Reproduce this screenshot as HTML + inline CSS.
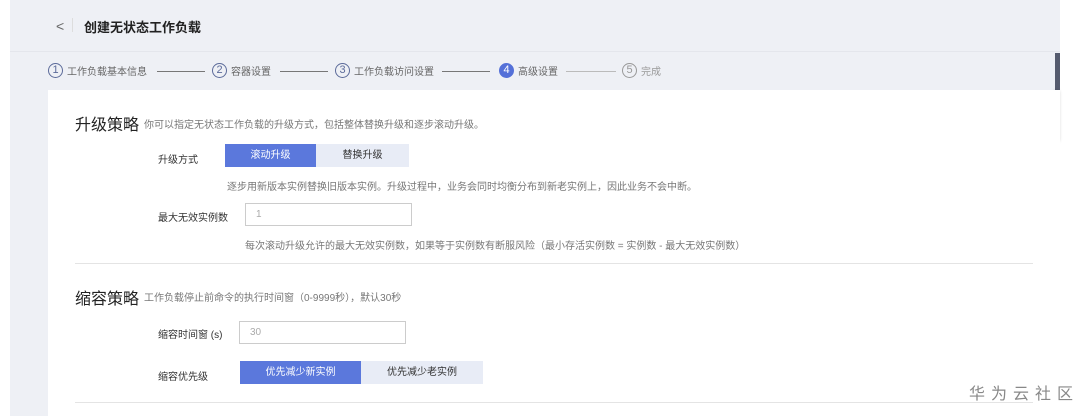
<!DOCTYPE html>
<html><head><meta charset="utf-8"><style>
*{margin:0;padding:0;box-sizing:border-box}
body{width:1090px;height:416px;overflow:hidden;background:#fff;font-family:"Liberation Sans","Noto Sans CJK SC",sans-serif;position:relative;color:#333}
.bg{position:absolute;left:10px;top:0;width:1050px;height:416px;background:#eef0f5}
.rline{position:absolute;left:1059px;top:140px;width:1px;height:276px;background:#ddd}
.hdr{position:absolute;left:10px;top:0;width:1050px;height:52px;border-bottom:1px solid #e4e6ec}
.t{position:absolute;font-size:12px;white-space:nowrap}
.card{position:absolute;left:48px;top:90px;width:1012px;height:326px;background:#fff}
.step{position:absolute;top:63px;font-size:10px;color:#666;white-space:nowrap;display:flex;align-items:center}
.c{display:inline-block;width:15px;height:15px;border:1px solid #5c6b9a;border-radius:50%;font-size:11px;line-height:13px;text-align:center;color:#5c6b9a;margin-right:4px}
.dash{position:absolute;top:71px;height:1px;background:#777}
.btn{position:absolute;font-size:10px;text-align:center;line-height:23px;height:23px}
.inp{position:absolute;border:1px solid #ccc;height:23px;font-size:10px;color:#aaa;line-height:21px;padding-left:10px}
.hr{position:absolute;height:1px;background:#e4e4e4}
.d{color:#777;font-size:10px}
</style></head><body>
<div class="bg"></div>
<div class="hdr"></div>
<div class="t" style="left:56px;top:18px;font-size:14px;color:#666">&lt;</div>
<div style="position:absolute;left:72px;top:18px;width:1px;height:14px;background:#ddd"></div>
<div class="t" style="left:84px;top:17px;font-size:13px;font-weight:bold;color:#222">创建无状态工作负载</div>

<div class="step" style="left:48px"><span class="c">1</span>工作负载基本信息</div>
<div class="dash" style="left:157px;width:48px"></div>
<div class="step" style="left:212px"><span class="c">2</span>容器设置</div>
<div class="dash" style="left:280px;width:48px"></div>
<div class="step" style="left:335px"><span class="c">3</span>工作负载访问设置</div>
<div class="dash" style="left:442px;width:48px"></div>
<div class="step" style="left:499px"><span class="c" style="background:#5470d8;border-color:#5470d8;color:#fff">4</span>高级设置</div>
<div class="dash" style="left:566px;width:50px;background:#bbb"></div>
<div class="step" style="left:622px;color:#999"><span class="c" style="border-color:#999;color:#999">5</span>完成</div>

<div style="position:absolute;left:1055px;top:53px;width:5px;height:37px;background:#555b6e"></div>
<div style="position:absolute;left:1055px;top:90px;width:5px;height:50px;background:#fff;box-shadow:-1px 1px 3px rgba(0,0,0,.3)"></div>
<div class="rline"></div>

<div class="card"></div>
<div class="t" style="left:75px;top:111px;font-size:16px;color:#222">升级策略</div>
<div class="t d" style="left:144px;top:116px">你可以指定无状态工作负载的升级方式，包括整体替换升级和逐步滚动升级。</div>
<div class="t" style="left:158px;top:151px;font-size:10px">升级方式</div>
<div class="btn" style="left:225px;top:144px;width:91px;background:#5b78dc;color:#fff">滚动升级</div>
<div class="btn" style="left:316px;top:144px;width:93px;background:#e8ecf6;color:#333">替换升级</div>
<div class="t d" style="left:227px;top:178px">逐步用新版本实例替换旧版本实例。升级过程中，业务会同时均衡分布到新老实例上，因此业务不会中断。</div>
<div class="t" style="left:158px;top:209px;font-size:10px">最大无效实例数</div>
<div class="inp" style="left:245px;top:203px;width:167px">1</div>
<div class="t d" style="left:245px;top:237px">每次滚动升级允许的最大无效实例数，如果等于实例数有断服风险（最小存活实例数 = 实例数 - 最大无效实例数）</div>
<div class="hr" style="left:75px;top:263px;width:958px"></div>

<div class="t" style="left:75px;top:285px;font-size:16px;color:#222">缩容策略</div>
<div class="t d" style="left:144px;top:289px">工作负载停止前命令的执行时间窗（0-9999秒），默认30秒</div>
<div class="t" style="left:158px;top:326px;font-size:10px">缩容时间窗 (s)</div>
<div class="inp" style="left:239px;top:321px;width:167px">30</div>
<div class="t" style="left:158px;top:368px;font-size:10px">缩容优先级</div>
<div class="btn" style="left:240px;top:361px;width:121px;background:#5b78dc;color:#fff">优先减少新实例</div>
<div class="btn" style="left:361px;top:361px;width:122px;background:#e8ecf6;color:#333">优先减少老实例</div>
<div class="hr" style="left:75px;top:402px;width:958px"></div>
<div class="t" style="left:969px;top:380px;font-size:16px;color:#888;letter-spacing:6px">华为云社区</div>
</body></html>
